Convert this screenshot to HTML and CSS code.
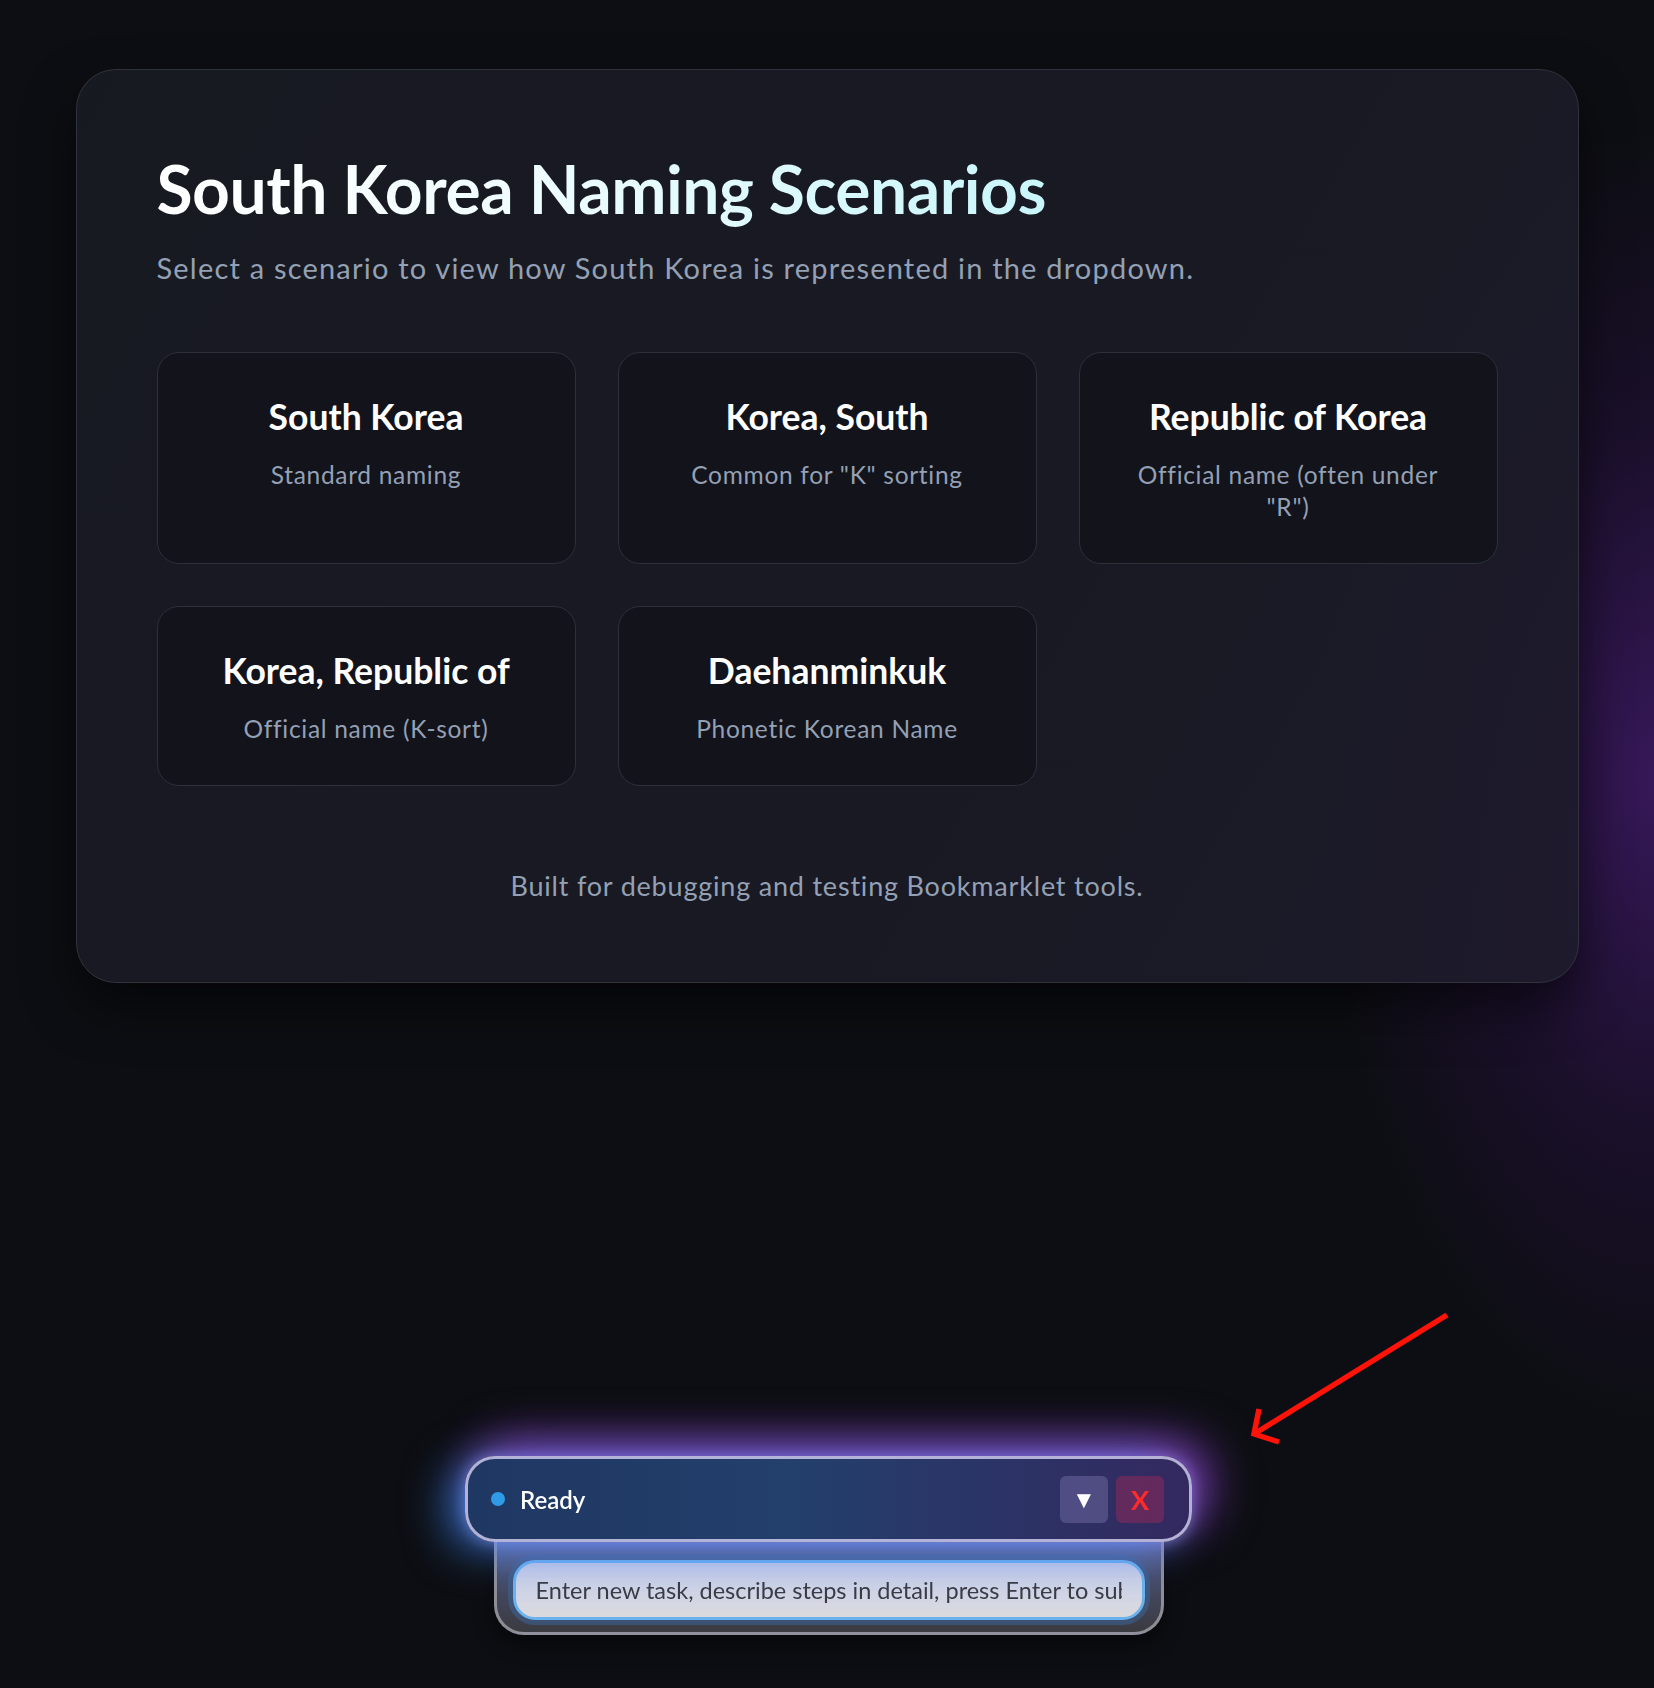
FILE: index.html
```html
<!DOCTYPE html>
<html lang="en">
<head>
<meta charset="utf-8">
<title>South Korea Naming Scenarios</title>
<link rel="stylesheet" href="styles.css">
</head>
<body>
<main class="panel">
  <h1 class="title">South Korea Naming Scenarios</h1>
  <p class="subtitle">Select a scenario to view how South Korea is represented in the dropdown.</p>
  <div class="grid">
    <div class="option"><h2 class="option-name">South Korea</h2><p class="option-desc">Standard naming</p></div>
    <div class="option"><h2 class="option-name">Korea, South</h2><p class="option-desc">Common for "K" sorting</p></div>
    <div class="option"><h2 class="option-name">Republic of Korea</h2><p class="option-desc">Official name (often under "R")</p></div>
    <div class="option"><h2 class="option-name">Korea, Republic of</h2><p class="option-desc">Official name (K-sort)</p></div>
    <div class="option"><h2 class="option-name">Daehanminkuk</h2><p class="option-desc">Phonetic Korean Name</p></div>
  </div>
  <p class="footer">Built for debugging and testing Bookmarklet tools.</p>
</main>

<div class="agent">
  <div class="status-bar">
    <span class="dot"></span>
    <span class="status">Ready</span>
    <div class="actions">
      <button class="btn btn-toggle" type="button">&#9660;</button>
      <button class="btn btn-close" type="button">X</button>
    </div>
  </div>
  <div class="task-panel">
    <input class="task-input" type="text" placeholder="Enter new task, describe steps in detail, press Enter to submit">
  </div>
</div>

<svg class="pointer-arrow" width="210" height="150" viewBox="0 0 210 150" aria-hidden="true">
  <path d="M205 10 L12 129" stroke="#ff1208" stroke-width="5.5" fill="none"/>
  <path d="M17 104 L12 129 L37 137" stroke="#ff1208" stroke-width="5.5" fill="none" stroke-linejoin="miter"/>
</svg>
</body>
</html>
```

FILE: styles.css
```css
* { box-sizing: border-box; }

html, body {
  margin: 0;
  padding: 0;
  height: 100%;
}

body {
  font-family: "Lato", "Noto Sans", sans-serif;
  color: #fff;
  background-color: #0d0e13;
  background-image:
    radial-gradient(ellipse 330px 650px at 100% 46%, rgba(82, 30, 135, 0.6), rgba(60, 20, 100, 0.28) 55%, rgba(13, 14, 19, 0) 100%);
  background-repeat: no-repeat;
  min-height: 1688px;
  overflow: hidden;
}

.panel {
  width: 1503px;
  margin: 69px auto 0;
  padding: 80px 80px 78px;
  border: 1px solid #30323d;
  border-radius: 40px;
  background: linear-gradient(120deg, rgba(24, 26, 34, 0.97) 0%, rgba(25, 26, 36, 0.95) 60%, rgba(30, 27, 44, 0.9) 100%);
  box-shadow: 0 24px 50px rgba(0, 0, 0, 0.55);
}

.title {
  margin: 0;
  font-size: 66px;
  line-height: 77px;
  font-weight: 700;
  letter-spacing: -0.5px;
  background: linear-gradient(90deg, #ffffff 0%, #f0fdff 40%, #c9f6fb 100%);
  -webkit-background-clip: text;
  background-clip: text;
  color: transparent;
  display: inline-block;
}

.subtitle {
  margin: 23px 0 0;
  font-size: 29px;
  line-height: 36px;
  letter-spacing: 1.2px;
  color: #94a0b4;
}

.grid {
  margin-top: 66px;
  display: grid;
  grid-template-columns: repeat(3, 419px);
  gap: 42px;
  align-items: stretch;
}

.option {
  border: 1.5px solid #2d2f39;
  border-radius: 22px;
  background: #12131b;
  padding: 43px 40px 40px;
  text-align: center;
}

.option-name {
  margin: 0;
  font-size: 35.5px;
  line-height: 42px;
  font-weight: 700;
  color: #fff;
}

.option-desc {
  margin: 21px 0 0;
  font-size: 24.5px;
  line-height: 32px;
  letter-spacing: 0.7px;
  color: #94a0b4;
}

.footer {
  margin: 82px 0 0;
  text-align: center;
  font-size: 27px;
  line-height: 36px;
  letter-spacing: 0.8px;
  color: #94a0b4;
}

/* floating agent widget */
.agent {
  position: fixed;
  left: 465px;
  top: 1456px;
  width: 727px;
  display: flex;
  flex-direction: column;
  align-items: center;
}

.status-bar {
  position: relative;
  z-index: 2;
  width: 100%;
  height: 86px;
  display: flex;
  align-items: center;
  padding: 0 25px 0 23px;
  border: 3px solid rgba(205, 200, 235, 0.85);
  border-radius: 30px;
  background: linear-gradient(90deg, #1f3763 0%, #233f6b 45%, #2c3366 75%, #33295f 100%);
  box-shadow:
    -18px 8px 44px rgba(60, 150, 255, 0.6),
    18px -14px 48px rgba(170, 80, 240, 0.6),
    0 -12px 44px rgba(150, 90, 220, 0.35),
    0 0 14px rgba(200, 190, 255, 0.5);
}

.dot {
  width: 14px;
  height: 14px;
  border-radius: 50%;
  background: #2f9be6;
  flex: none;
}

.status {
  margin-left: 15px;
  font-size: 24px;
  font-weight: 600;
  color: #fff;
}

.actions {
  margin-left: auto;
  display: flex;
  gap: 8px;
}

.btn {
  width: 48px;
  height: 47px;
  border: none;
  border-radius: 6px;
  display: flex;
  align-items: center;
  justify-content: center;
  font-family: "Lato", sans-serif;
  padding: 0;
}

.btn-toggle {
  background: rgba(120, 115, 170, 0.45);
  color: #fff;
  font-size: 24px;
}

.btn-close {
  background: rgba(150, 40, 90, 0.5);
  color: #ff2a2a;
  font-size: 27px;
  font-weight: 700;
}

.task-panel {
  position: relative;
  z-index: 1;
  width: 670px;
  margin-top: -3px;
  padding: 21px 16px 12px;
  border: 3px solid rgba(150, 150, 158, 0.9);
  border-top: none;
  border-radius: 0 0 30px 30px;
  background: linear-gradient(180deg, #5a6590 0%, #474c68 45%, #3a3a40 100%);
  box-shadow: 0 10px 20px rgba(0, 0, 0, 0.45);
}

.task-input {
  display: block;
  width: 100%;
  height: 60px;
  padding: 0 20px;
  border: 3px solid #6ab2ee;
  border-radius: 22px;
  background: linear-gradient(180deg, #c5cbe6 0%, #d0d4e6 50%, #dadade 100%);
  box-shadow: 0 0 0 5px rgba(60, 100, 150, 0.55);
  font-family: "Lato", sans-serif;
  font-size: 23.5px;
  letter-spacing: 0;
  color: #33343c;
  outline: none;
}

.task-input::placeholder {
  color: #3a3b44;
  opacity: 1;
}

.pointer-arrow {
  position: absolute;
  left: 1242px;
  top: 1305px;
}
```
